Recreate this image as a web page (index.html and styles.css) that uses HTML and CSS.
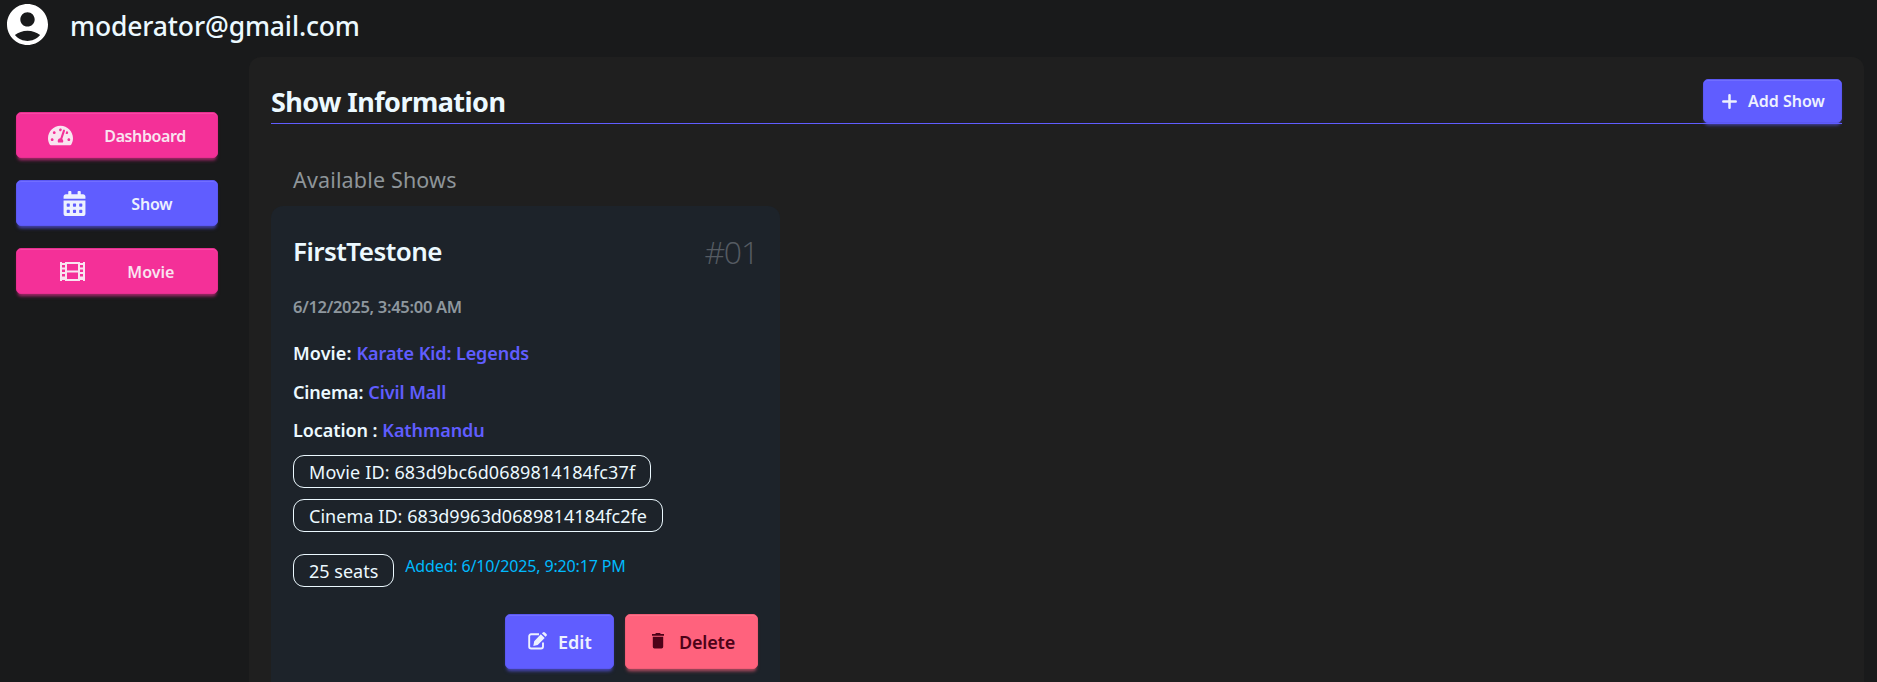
FILE: index.html
```html
<!DOCTYPE html>
<html lang="en">
<head>
<meta charset="utf-8">
<title>Show Information</title>
<link rel="stylesheet" href="styles.css">
</head>
<body>
<header class="topbar">
  <svg class="avatar" viewBox="2 2 20 20" fill="currentColor"><path d="M12 2C6.48 2 2 6.48 2 12s4.48 10 10 10 10-4.48 10-10S17.52 2 12 2zm0 4c1.93 0 3.5 1.57 3.5 3.5S13.93 13 12 13s-3.500-1.570-3.500-3.500S10.070 6 12 6zm0 14c-2.030 0-4.430-.82-6.140-2.880C7.550 15.800 9.680 15 12 15s4.450.8 6.140 2.120C16.430 19.180 14.030 20 12 20z"/></svg>
  <span class="email">moderator@gmail.com</span>
</header>
<div class="layout">
  <nav class="sidebar">
    <button class="btn nav-btn secondary">
      <svg class="nav-icon" viewBox="0 0 576 512" fill="currentColor"><path d="M288 32C128.940 32 0 160.940 0 320c0 52.800 14.250 102.260 39.060 144.800 5.610 9.620 16.300 15.200 27.440 15.200h443c11.140 0 21.830-5.580 27.440-15.200C561.750 422.260 576 372.800 576 320c0-159.060-128.940-288-288-288zm0 64c14.710 0 26.580 10.130 30.320 23.650-1.110 2.260-2.640 4.230-3.450 6.670l-9.220 27.670c-5.130 3.490-10.970 6.010-17.640 6.010-17.670 0-32-14.330-32-32S270.330 96 288 96zM96 384c-17.670 0-32-14.330-32-32s14.330-32 32-32 32 14.330 32 32-14.330 32-32 32zm48-160c-17.670 0-32-14.330-32-32s14.330-32 32-32 32 14.330 32 32-14.330 32-32 32zm246.770-72.410l-61.330 184C343.130 347.330 352 364.540 352 384c0 11.720-3.380 22.550-8.880 32H232.880c-5.500-9.450-8.880-20.280-8.880-32 0-33.940 26.500-61.430 59.900-63.590l61.340-184.010c4.170-12.560 17.730-19.450 30.360-15.170 12.570 4.190 19.350 17.790 15.170 30.360zm14.660 57.200l15.520-46.550c3.470-1.290 7.130-2.230 11.050-2.230 17.670 0 32 14.330 32 32s-14.330 32-32 32c-11.380-.01-20.890-6.280-26.570-15.220zM480 384c-17.670 0-32-14.330-32-32s14.330-32 32-32 32 14.330 32 32-14.330 32-32 32z"/></svg>
      <span class="label-dashboard">Dashboard</span>
    </button>
    <button class="btn nav-btn primary">
      <svg class="nav-icon" viewBox="0 0 448 512" fill="currentColor"><path d="M0 464c0 26.500 21.500 48 48 48h352c26.500 0 48-21.500 48-48V192H0v272zm320-196c0-6.600 5.400-12 12-12h40c6.600 0 12 5.400 12 12v40c0 6.600-5.400 12-12 12h-40c-6.600 0-12-5.400-12-12v-40zm0 128c0-6.600 5.400-12 12-12h40c6.600 0 12 5.400 12 12v40c0 6.600-5.400 12-12 12h-40c-6.600 0-12-5.400-12-12v-40zM192 268c0-6.600 5.400-12 12-12h40c6.600 0 12 5.400 12 12v40c0 6.600-5.400 12-12 12h-40c-6.600 0-12-5.400-12-12v-40zm0 128c0-6.600 5.400-12 12-12h40c6.600 0 12 5.400 12 12v40c0 6.600-5.400 12-12 12h-40c-6.600 0-12-5.400-12-12v-40zM64 268c0-6.600 5.400-12 12-12h40c6.600 0 12 5.400 12 12v40c0 6.600-5.400 12-12 12H76c-6.600 0-12-5.400-12-12v-40zm0 128c0-6.600 5.400-12 12-12h40c6.600 0 12 5.400 12 12v40c0 6.600-5.400 12-12 12H76c-6.600 0-12-5.400-12-12v-40zM400 64h-48V16c0-8.800-7.200-16-16-16h-32c-8.800 0-16 7.200-16 16v48H160V16c0-8.800-7.200-16-16-16h-32c-8.800 0-16 7.200-16 16v48H48C21.500 64 0 85.500 0 112v48h448v-48c0-26.500-21.500-48-48-48z"/></svg>
      <span class="label-show">Show</span>
    </button>
    <button class="btn nav-btn secondary">
      <svg class="nav-icon" viewBox="0 0 25 25" fill="currentColor" fill-rule="evenodd"><path d="M0 3h2v1h3V3h15v1h3V3h2v19h-2v-1h-3v1H5v-1H2v1H0zM2 6v2.500h3V6zM2 10.500v2.500h3v-2.500zM2 15v2.500h3V15zM20 6v2.500h3V6zM20 10.500v2.500h3v-2.500zM20 15v2.500h3V15zM7 5v6.500h11V5zM7 13.500V20h11v-6.500z"/></svg>
      <span class="label-movie">Movie</span>
    </button>
  </nav>
  <main class="panel">
    <div class="panel-head">
      <h1 class="title">Show Information</h1>
      <button class="btn primary add-btn">
        <svg class="plus" viewBox="0 0 15 15" stroke="currentColor" stroke-width="2.500" stroke-linecap="round"><path d="M7.500 1.300v12.400M1.300 7.500h12.400"/></svg>
        <span class="label-add">Add Show</span>
      </button>
    </div>
    <p class="subtitle"><span>Available Shows</span></p>
    <article class="card">
      <div class="card-head">
        <h2 class="name">FirstTestone</h2>
        <span class="index">#01</span>
      </div>
      <p class="date"><span>6/12/2025, 3:45:00 AM</span></p>
      <p class="row"><span class="k k-movie">Movie:</span><span class="v v-movie">Karate Kid: Legends</span></p>
      <p class="row"><span class="k k-cinema">Cinema:</span><span class="v v-cinema">Civil Mall</span></p>
      <p class="row"><span class="k k-location">Location :</span><span class="v v-location">Kathmandu</span></p>
      <div class="badges">
        <span class="badge"><span class="b-movie">Movie ID: 683d9bc6d0689814184fc37f</span></span>
        <span class="badge"><span class="b-cinema">Cinema ID: 683d9963d0689814184fc2fe</span></span>
      </div>
      <div class="meta">
        <span class="badge"><span class="b-seats">25 seats</span></span>
        <span class="added">Added: 6/10/2025, 9:20:17 PM</span>
      </div>
      <div class="actions">
        <button class="btn primary edit-btn">
          <svg class="edit-icon" viewBox="0 0 19 18"><path d="M11 2.300H3.200Q1.200 2.300 1.200 4.300V14.800Q1.200 16.500 3.200 16.500H13Q15 16.500 15 14.500V10.500" fill="none" stroke="currentColor" stroke-width="1.900"/><path d="M12.800 2.300l3.900 3.700-7 7-4.400 1 .9-4.700zM13.900 1.300l1-.9q1-.8 2 0l1.600 1.500q.8 1 0 1.900l-1 1z" fill="currentColor"/></svg>
          <span class="label-edit">Edit</span>
        </button>
        <button class="btn error delete-btn">
          <svg class="trash" viewBox="0 0 12 16" fill="currentColor"><path d="M0 1h3.200l.8-1h4l.8 1H12v1.700H0zM.8 3.700h10.400v10.100q0 1.700-1.700 1.700H2.500Q.8 15.500.8 13.800z"/></svg>
          <span class="label-delete">Delete</span>
        </button>
      </div>
    </article>
  </main>
</div>
</body>
</html>
```
FILE: styles.css
```css
* { box-sizing: border-box; margin: 0; padding: 0; }
body {
  height: 682px; overflow: hidden;
  background: #191a1b; color: #ecf9ff;
  font-family: "Segoe UI", "Noto Sans", "Open Sans", sans-serif;
}
span, h1, h2 { white-space: nowrap; }
.topbar { display: flex; align-items: center; height: 57px; padding: 0 0 8px 7px; gap: 22px; }
.avatar { width: 41px; height: 41px; color: #fff; }
.email { font-size: 26.500px; font-weight: 500; line-height: 40px; padding-top: 3px; letter-spacing: -.15px; }
.layout { display: flex; height: 625px; }
.sidebar { width: 249px; padding: 55px 0 0 16px; display: flex; flex-direction: column; gap: 22px; }
.btn {
  display: flex; align-items: center; border: 1px solid; border-radius: 5px;
  font-family: inherit; font-weight: 600; font-size: 16px;
}
.primary { background: #605dff; color: #edf1fe; border-color: #5b58f2; box-shadow: inset 0 1px 0 #716eff, 0 4px 3px -2px #605dff66, 0 4px 4px -2px #605dff66; }
.secondary { background: #f43098; color: #f9e4f0; border-color: #e82e90; box-shadow: inset 0 1px 0 #f64aa5, 0 4px 3px -2px #f4309866, 0 4px 4px -2px #f4309866; }
.error { background: #ff627d; color: #4d0218; border-color: #f25d77; box-shadow: inset 0 1px 0 #ff738a, 0 4px 3px -2px #ff627d66, 0 4px 4px -2px #ff627d66; }
.nav-btn { width: 202px; height: 46px; justify-content: space-evenly; }
.nav-btn span, .actions span { padding-top: 2px; }
.nav-icon { width: 25px; height: 25px; }
.label-dashboard { letter-spacing: -.4px; }
.label-show { letter-spacing: -.2px; }
.panel { width: 1615px; background: #1f1f1f; border-radius: 12px 12px 0 0; padding: 22px 22px 0; }
.panel-head { display: flex; justify-content: space-between; height: 45px; border-bottom: 1px solid #605dff; }
.title { font-size: 27px; font-weight: 700; line-height: 45px; letter-spacing: -.54px; }
.add-btn { width: 139px; height: 44px; padding-left: 18px; gap: 11px; }
.plus { width: 15px; height: 15px; }
.subtitle { height: 82px; padding: 38px 0 0 22px; font-size: 21.500px; line-height: 36px; color: #8e9599; letter-spacing: .16px; }
.card { width: 509px; height: 500px; background: #1d232a; border-radius: 12px; padding: 22px; }
.card-head { display: flex; justify-content: space-between; height: 46px; }
.name { font-size: 26px; font-weight: 600; line-height: 46px; letter-spacing: -.53px; }
.index { font-family: "Open Sans", "Noto Sans", sans-serif; font-size: 32px; font-weight: 300; line-height: 48px; color: #555b62; letter-spacing: -1.200px; }
.date { margin-top: 16px; height: 32px; font-size: 16.500px; font-weight: 600; line-height: 33px; color: #8e979e; letter-spacing: -.3px; }
.date + .row { margin-top: 12px; }
.row { display: flex; height: 38.500px; font-size: 18px; font-weight: 600; line-height: 38px; gap: 5px; letter-spacing: -.08px; }
.k-movie { letter-spacing: .1px; }
.k-cinema { letter-spacing: -.15px; }
.v { color: #605dff; }
.badges { display: flex; flex-direction: column; align-items: flex-start; gap: 11px; margin-top: 5px; }
.badge { display: inline-flex; height: 33px; padding: 0 15px; border: 1px solid #ecf9ff; border-radius: 11px; font-size: 18px; line-height: 33px; }
.b-movie { letter-spacing: .12px; }
.b-cinema { letter-spacing: .05px; }
.meta { display: flex; gap: 11px; margin-top: 22px; }
.added { font-size: 16px; line-height: 24px; color: #00bafe; letter-spacing: -.14px; }
.actions { display: flex; justify-content: flex-end; gap: 11px; margin-top: 27px; }
.edit-btn, .delete-btn { height: 55px; font-size: 18px; }
.edit-btn { width: 109px; padding-left: 22px; gap: 11px; }
.delete-btn { width: 133px; padding-left: 26px; gap: 15px; letter-spacing: -.2px; }
.edit-icon { width: 19px; height: 18px; }
.trash { width: 12px; height: 16px; }
```
